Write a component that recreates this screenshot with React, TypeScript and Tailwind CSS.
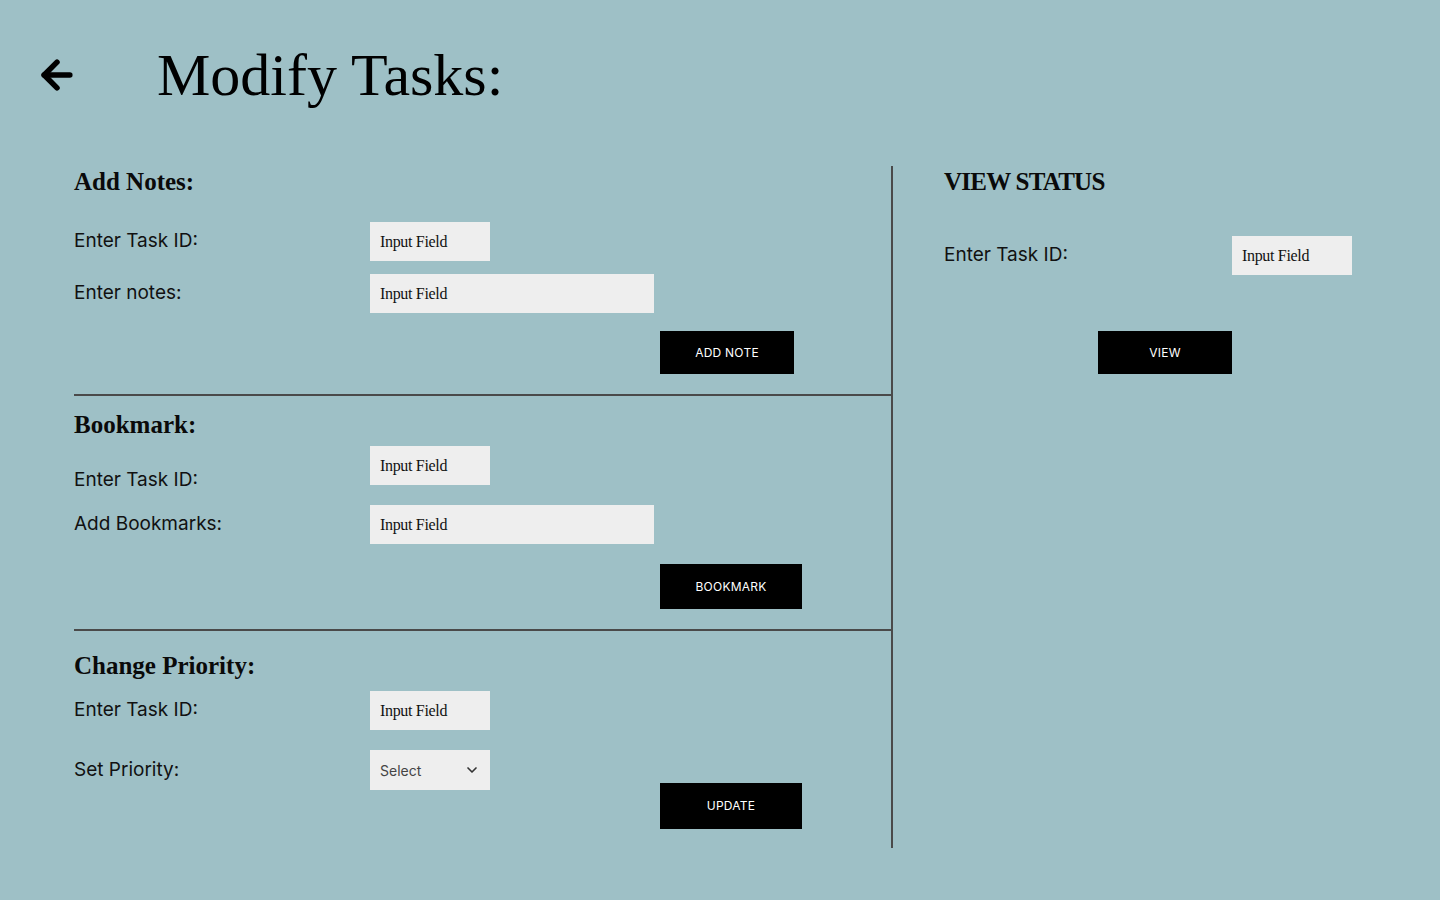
import { ArrowLeft, ChevronDown } from "lucide-react";

const serif = "font-['Liberation_Serif','Times_New_Roman',serif]";
const sans = "font-['Inter','Noto_Sans',sans-serif]";

const Label = ({ children, className = "" }: { children: React.ReactNode; className?: string }) => (
  <div className={`w-[296px] shrink-0 text-[19px] text-[#111] ${sans} ${className}`}>{children}</div>
);

const Field = ({ wide = false }: { wide?: boolean }) => (
  <input
    type="text"
    placeholder="Input Field"
    className={`${wide ? "w-[284px]" : "w-[120px]"} h-[39px] bg-[#eeeeee] px-[10px] text-[16px] tracking-[-0.02em] text-[#111] placeholder:text-[#111] outline-none ${serif}`}
  />
);

const Heading = ({ children, className = "" }: { children: React.ReactNode; className?: string }) => (
  <h2 className={`h-8 leading-8 text-[25px] font-bold text-[#0a0a0a] ${serif} ${className}`}>{children}</h2>
);

const ActionButton = ({ label, w, h }: { label: string; w: string; h: string }) => (
  <button className={`${w} ${h} bg-black text-white text-[12px] tracking-[0.02em] ${sans}`}>{label}</button>
);

export default function App() {
  return (
    <div className="min-h-[900px] w-full bg-[#9ec0c6] overflow-hidden">
      <header className="flex items-center pt-[45px] h-[105px]">
        <div className="w-[157px] pl-[35px] flex items-center">
          <ArrowLeft size={44} strokeWidth={3} className="text-black" />
        </div>
        <h1 className={`text-[60px] leading-[60px] text-black ${serif}`}>Modify Tasks:</h1>
      </header>

      <main className="flex mt-[61px]">
        <section className="w-[819px] ml-[74px] border-r-2 border-[#4a4a4a] h-[682px]">
          {/* notes */}
          <div className="border-b-2 border-[#4a4a4a] pb-[20px]">
            <Heading>Add Notes:</Heading>
            <div className="flex items-center mt-[24px]">
              <Label>Enter Task ID:</Label>
              <Field />
            </div>
            <div className="flex items-center mt-[13px]">
              <Label>Enter notes:</Label>
              <Field wide />
            </div>
            <div className="ml-[586px] mt-[18px]">
              <ActionButton label="ADD NOTE" w="w-[134px]" h="h-[43px]" />
            </div>
          </div>

          {/* bookmark */}
          <div className="border-b-2 border-[#4a4a4a] pt-[13px] pb-[20px]">
            <Heading>Bookmark:</Heading>
            <div className="flex items-start h-[39px] mt-[5px]">
              <Label className="pt-[20px]">Enter Task ID:</Label>
              <Field />
            </div>
            <div className="flex items-center mt-[20px]">
              <Label>Add Bookmarks:</Label>
              <Field wide />
            </div>
            <div className="ml-[586px] mt-[20px]">
              <ActionButton label="BOOKMARK" w="w-[142px]" h="h-[45px]" />
            </div>
          </div>

          {/* priority */}
          <div className="pt-[19px]">
            <Heading>Change Priority:</Heading>
            <div className="flex items-center mt-[9px]">
              <Label>Enter Task ID:</Label>
              <Field />
            </div>
            <div className="flex items-center mt-[20px]">
              <Label>Set Priority:</Label>
              <div className="relative w-[120px] h-[40px]">
                <select
                  defaultValue=""
                  className={`appearance-none w-full h-full bg-[#eeeeee] pl-[10px] text-[14px] text-[#444] outline-none ${sans}`}
                >
                  <option value="">Select</option>
                  <option>High</option>
                  <option>Medium</option>
                  <option>Low</option>
                </select>
                <ChevronDown size={16} strokeWidth={2.5} className="absolute right-[10px] top-[12px] text-[#333] pointer-events-none" />
              </div>
            </div>
            <div className="ml-[586px] mt-[-7px]">
              <ActionButton label="UPDATE" w="w-[142px]" h="h-[46px]" />
            </div>
          </div>
        </section>

        <section className="pl-[51px] w-[460px]">
          <Heading className="tracking-[-0.03em]">VIEW STATUS</Heading>
          <div className="flex items-center justify-between w-[408px] mt-[38px]">
            <div className={`text-[19px] text-[#111] ${sans}`}>Enter Task ID:</div>
            <Field />
          </div>
          <div className="ml-[154px] mt-[56px]">
            <ActionButton label="VIEW" w="w-[134px]" h="h-[43px]" />
          </div>
        </section>
      </main>
    </div>
  );
}
